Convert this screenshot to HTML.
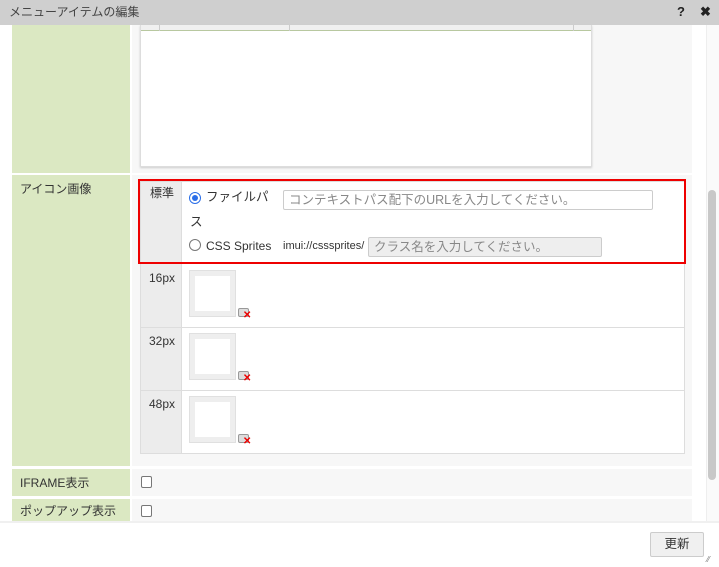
<!DOCTYPE html>
<html><head><meta charset="utf-8"><style>
*{box-sizing:border-box;margin:0;padding:0}
body{width:719px;height:564px;overflow:hidden;background:#fff;font-family:"Liberation Sans","Noto Sans CJK JP",sans-serif;font-size:12px;line-height:14px;color:#333;position:relative}
.a{position:absolute}
.g{background:#dbe8c2}
.r{background:#f7f7f7}
.lc{background:#ececec}
.ib{background:#eee;border:1px solid #e0e0e0}
.ib div{position:absolute;left:5px;top:5px;right:5px;bottom:5px;background:#fff}
.del{width:11px;height:9px;border:1px solid #999;background:#ddd;border-radius:2px}
.x{color:#e00;font-size:10px;font-weight:bold;line-height:8px}
.rad{width:12px;height:12px;border-radius:50%;border:1px solid #777;background:#fff}
.cb{width:11px;height:12px;border:1px solid #777;border-radius:2px;background:#fff}
</style></head><body>
<div class="a" style="left:0;top:0;width:719px;height:25px;background:#cfcfcf"></div>
<div class="a" style="left:9px;top:5px;font-size:12px;color:#444">メニューアイテムの編集</div>
<div class="a" style="left:677px;top:5px;font-size:13px;font-weight:bold;color:#222">?</div>
<div class="a" style="left:700px;top:5px;font-size:13px;font-weight:bold;color:#222">✖</div>
<div class="a" style="left:706px;top:25px;width:13px;height:496px;background:#fafafa;border-left:1px solid #eee"></div>
<div class="a" style="left:708px;top:190px;width:8px;height:290px;background:#c8c8c8;border-radius:4px"></div>
<div class="a g" style="left:12px;top:25px;width:118px;height:148px"></div>
<div class="a r" style="left:132px;top:25px;width:560px;height:148px"></div>
<div class="a" style="left:140px;top:25px;width:452px;height:142px;background:#fff;border:1px solid #ddd;box-shadow:0 1px 2px #ccc"></div>
<div class="a" style="left:141px;top:25px;width:450px;height:6px;background:#f0f0f0;border-bottom:1px solid #b8c8a0"></div>
<div class="a" style="left:159px;top:25px;width:1px;height:6px;background:#ccc"></div>
<div class="a" style="left:289px;top:25px;width:1px;height:6px;background:#ccc"></div>
<div class="a" style="left:573px;top:25px;width:1px;height:6px;background:#ccc"></div>
<div class="a g" style="left:12px;top:175px;width:118px;height:291px"></div>
<div class="a r" style="left:132px;top:175px;width:560px;height:291px"></div>
<div class="a" style="left:20px;top:182px">アイコン画像</div>
<div class="a" style="left:140px;top:181px;width:545px;height:273px;background:#fff;border:1px solid #ddd"></div>
<div class="a lc" style="left:141px;top:182px;width:40px;height:271px"></div>
<div class="a" style="left:181px;top:182px;width:1px;height:271px;background:#ddd"></div>
<div class="a" style="left:141px;top:327px;width:544px;height:1px;background:#ddd"></div>
<div class="a" style="left:141px;top:390px;width:544px;height:1px;background:#ddd"></div>
<div class="a" style="left:138px;top:179px;width:548px;height:85px;border:2px solid #e00"></div>
<div class="a" style="left:150px;top:186px">標準</div>
<div class="a" style="left:189px;top:192px;width:12px;height:12px;border-radius:50%;border:1px solid #2a6ee8;background:#fff"><div class="a" style="left:2px;top:2px;width:6px;height:6px;border-radius:50%;background:#2a6ee8"></div></div>
<div class="a" style="left:206px;top:190px;font-size:12.5px">ファイルパ</div>
<div class="a" style="left:283px;top:190px;width:370px;height:20px;border:1px solid #ccc;border-radius:2px;background:#fff;color:#888;padding:0 5px;line-height:18px;font-size:12.5px">コンテキストパス配下のURLを入力してください。</div>
<div class="a" style="left:190px;top:215px;font-size:12.5px">ス</div>
<div class="a rad" style="left:189px;top:239px"></div>
<div class="a" style="left:206px;top:239px;font-size:12px">CSS Sprites</div>
<div class="a" style="left:283px;top:239px;font-size:11px">imui://csssprites/</div>
<div class="a" style="left:368px;top:237px;width:234px;height:20px;border:1px solid #ccc;border-radius:2px;background:#eee;color:#888;padding:0 5px;line-height:18px;font-size:12.5px">クラス名を入力してください。</div>
<div class="a" style="left:149px;top:271px">16px</div>
<div class="a" style="left:149px;top:334px">32px</div>
<div class="a" style="left:149px;top:397px">48px</div>
<div class="a ib" style="left:189px;top:270px;width:47px;height:47px"><div></div></div>
<div class="a ib" style="left:189px;top:333px;width:47px;height:47px"><div></div></div>
<div class="a ib" style="left:189px;top:396px;width:47px;height:47px"><div></div></div>
<div class="a del" style="left:238px;top:308px"></div><div class="a x" style="left:243px;top:312px">✕</div>
<div class="a del" style="left:238px;top:371px"></div><div class="a x" style="left:243px;top:375px">✕</div>
<div class="a del" style="left:238px;top:434px"></div><div class="a x" style="left:243px;top:438px">✕</div>
<div class="a g" style="left:12px;top:469px;width:118px;height:27px"></div>
<div class="a r" style="left:132px;top:469px;width:560px;height:27px"></div>
<div class="a" style="left:20px;top:476px">IFRAME表示</div>
<div class="a cb" style="left:141px;top:476px"></div>
<div class="a g" style="left:12px;top:499px;width:118px;height:22px"></div>
<div class="a r" style="left:132px;top:499px;width:560px;height:22px"></div>
<div class="a" style="left:20px;top:504px">ポップアップ表示</div>
<div class="a cb" style="left:141px;top:505px"></div>
<div class="a" style="left:0;top:521px;width:719px;height:43px;background:#fff;border-top:2px solid #f0f0f0"></div>
<div class="a" style="left:650px;top:532px;width:54px;height:25px;background:#f0f0f0;border:1px solid #ccc;border-radius:2px;text-align:center;line-height:23px;font-size:12.5px">更新</div>
<div class="a" style="left:707px;top:553px;font-size:8px;color:#777">⁄⁄</div>
</body></html>
